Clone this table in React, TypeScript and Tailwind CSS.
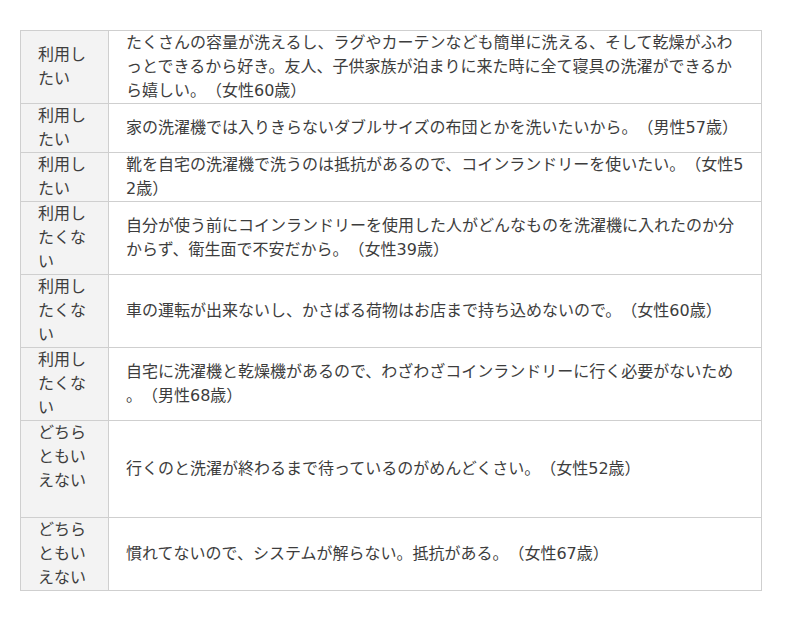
const rows: { label: string[]; lines: string[]; extra?: boolean }[] = [
  {
    label: ['利用し', 'たい'],
    lines: [
      'たくさんの容量が洗えるし、ラグやカーテンなども簡単に洗える、そして乾燥がふわ',
      'っとできるから好き。友人、子供家族が泊まりに来た時に全て寝具の洗濯ができるか',
      'ら嬉しい。（女性60歳）',
    ],
  },
  {
    label: ['利用し', 'たい'],
    lines: ['家の洗濯機では入りきらないダブルサイズの布団とかを洗いたいから。（男性57歳）'],
  },
  {
    label: ['利用し', 'たい'],
    lines: ['靴を自宅の洗濯機で洗うのは抵抗があるので、コインランドリーを使いたい。（女性5', '2歳）'],
  },
  {
    label: ['利用し', 'たくな', 'い'],
    lines: [
      '自分が使う前にコインランドリーを使用した人がどんなものを洗濯機に入れたのか分',
      'からず、衛生面で不安だから。（女性39歳）',
    ],
  },
  {
    label: ['利用し', 'たくな', 'い'],
    lines: ['車の運転が出来ないし、かさばる荷物はお店まで持ち込めないので。（女性60歳）'],
  },
  {
    label: ['利用し', 'たくな', 'い'],
    lines: [
      '自宅に洗濯機と乾燥機があるので、わざわざコインランドリーに行く必要がないため',
      '。（男性68歳）',
    ],
  },
  {
    label: ['どちら', 'ともい', 'えない'],
    lines: ['行くのと洗濯が終わるまで待っているのがめんどくさい。（女性52歳）'],
    extra: true,
  },
  {
    label: ['どちら', 'ともい', 'えない'],
    lines: ['慣れてないので、システムが解らない。抵抗がある。（女性67歳）'],
  },
];

export default function App() {
  return (
    <div
      className="min-h-[621px] bg-white pt-[30px] pl-[20px] text-[#3d3d3d] text-[16px] leading-[24px] [text-spacing-trim:space-all]"
      style={{ fontFamily: '"DejaVu Sans", "Noto Sans CJK JP", sans-serif' }}
    >
      <div className="w-[742px] border border-[#cfcfcf]">
        {rows.map((row, i) => (
          <div key={i} className={`flex ${i > 0 ? 'border-t border-[#cfcfcf]' : ''}`}>
            <div className="w-[88px] shrink-0 border-r border-[#cfcfcf] bg-[#f3f3f3] px-[17px] flex flex-col justify-center">
              {row.label.map((l, j) => (
                <div key={j} className="whitespace-nowrap">{l}</div>
              ))}
              {row.extra && <div className="h-6" />}
            </div>
            <div className="flex-1 px-[17px] flex flex-col justify-center">
              {row.lines.map((l, j) => (
                <div key={j} className="whitespace-nowrap">{l}</div>
              ))}
            </div>
          </div>
        ))}
      </div>
    </div>
  );
}
